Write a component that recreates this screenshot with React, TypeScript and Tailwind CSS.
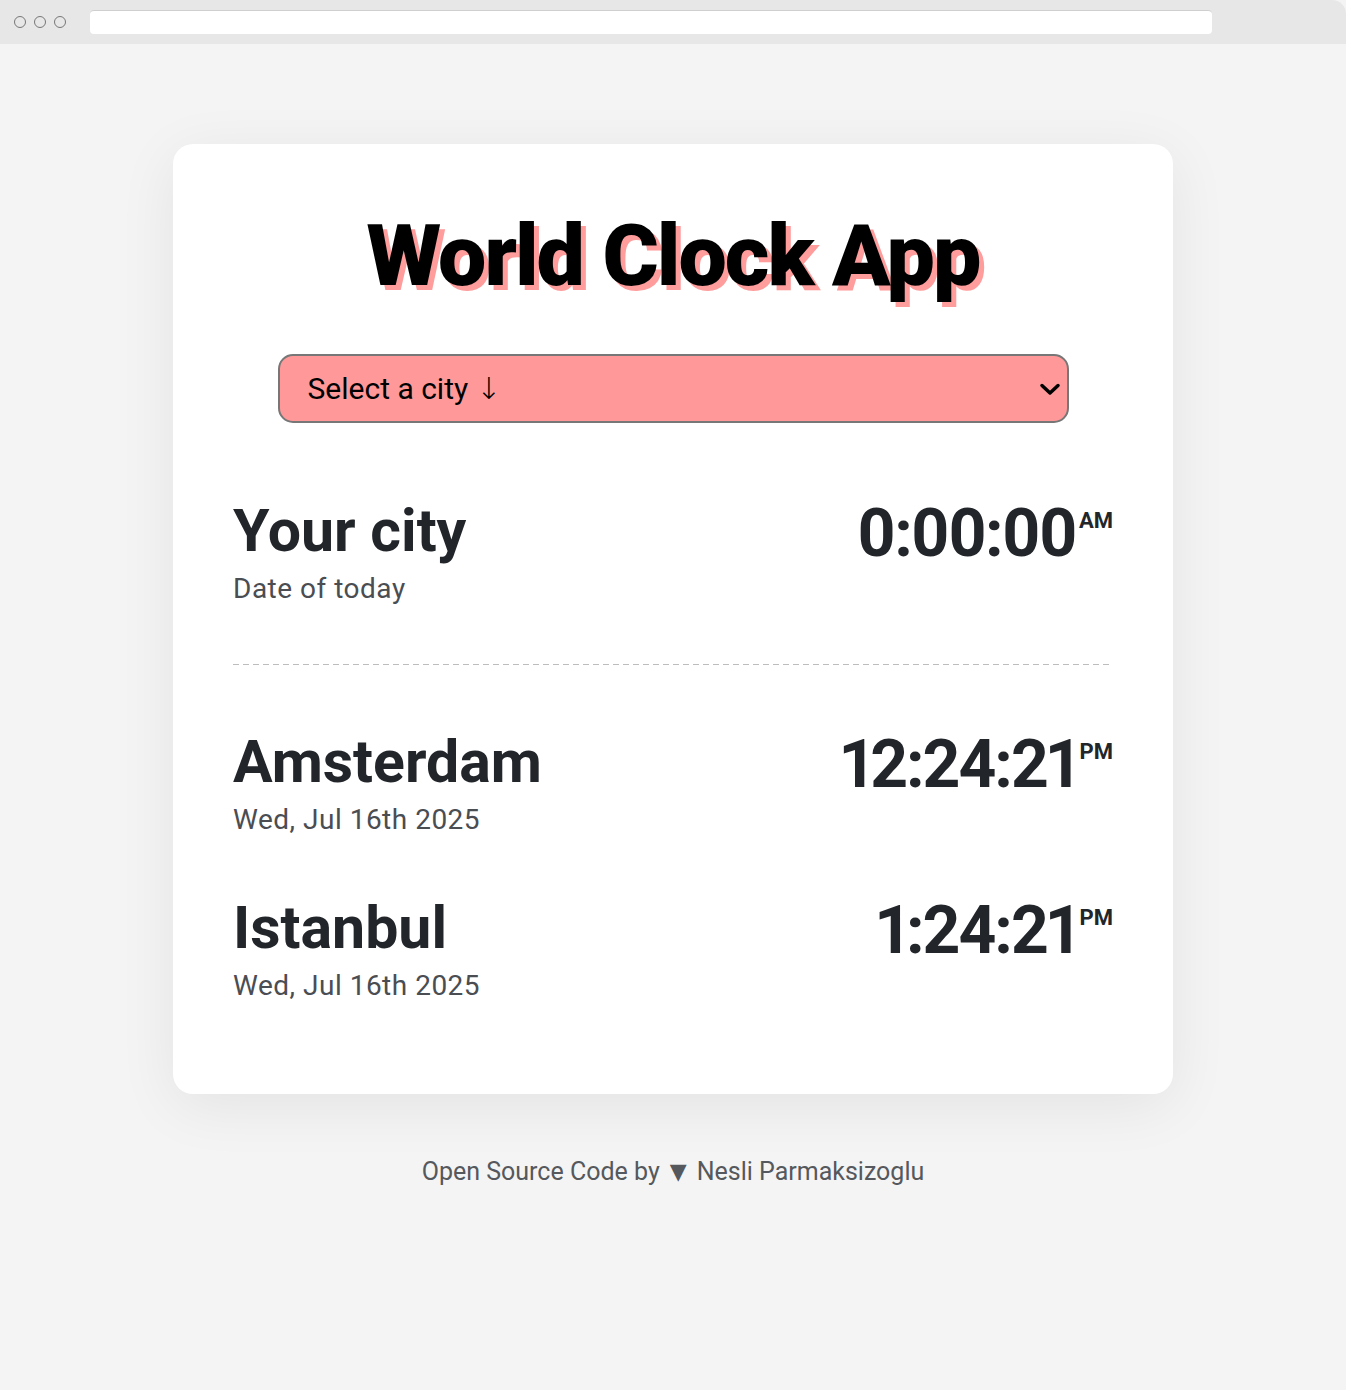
import React from "react";

const font = { fontFamily: "Roboto, 'Liberation Sans', sans-serif" };
const symbolFont = { fontFamily: "'DejaVu Sans', sans-serif" };

function Row({ name, date, time, ampm }: { name: string; date: string; time: string; ampm: string }) {
  return (
    <div className="flex items-start justify-between">
      <div className="flex flex-col">
        <div className="text-[59px] font-bold leading-[64px] text-[#22262b]">{name}</div>
        <div className="mt-[10px] text-[28px] leading-[32px] text-[#4a4d52] tracking-[0.5px]">{date}</div>
      </div>
      <div className="flex items-start text-[#22262b]">
        <span className="text-[66px] font-bold leading-[70px] tracking-[-2px] proportional-nums">{time}</span>
        <span className="ml-[3px] mt-[10px] text-[22px] font-bold leading-[24px]">{ampm}</span>
      </div>
    </div>
  );
}

export default function App() {
  return (
    <div className="min-h-[1390px] w-full bg-[#f4f4f4]" style={font}>
      <div className="flex h-[44px] items-center bg-[#e7e7e7] rounded-tr-[14px]">
        <div className="ml-[14px] flex gap-[8px]">
          <span className="h-[12px] w-[12px] rounded-full border border-[#777]" />
          <span className="h-[12px] w-[12px] rounded-full border border-[#777]" />
          <span className="h-[12px] w-[12px] rounded-full border border-[#777]" />
        </div>
        <div className="ml-[24px] h-[24px] w-[1122px] rounded-[4px] border-t border-[#cfcfcf] bg-white" />
      </div>
      <div className="flex flex-col items-center pt-[100px]">
        <div className="flex h-[950px] w-[1000px] flex-col rounded-[20px] bg-white px-[60px] shadow-[0_12px_60px_rgba(0,0,0,0.07)]">
          <h1 className="mt-[62px] text-center text-[86px] font-black leading-[100px] tracking-[-2px] text-black [text-shadow:5px_5px_0_#ff9c9c]">
            World Clock App
          </h1>
          <div className="mx-auto mt-[48px] flex h-[69px] w-[791px] items-center justify-between rounded-[15px] border-2 border-[#777] bg-[#ff9999] pl-[28px] pr-[6px]">
            <span className="flex items-center text-[30px] leading-[34px] text-black">
              Select a city
              <span className="ml-[8px] text-[30px] font-light leading-[34px] text-black" style={symbolFont}>↓</span>
            </span>
            <svg width="22" height="14" viewBox="0 0 22 14" fill="none">
              <path d="M3 3.5l8 7.5 8-7.5" stroke="#000" strokeWidth="3.5" strokeLinecap="round" strokeLinejoin="round" />
            </svg>
          </div>
          <div className="mt-[76px]">
            <Row name="Your city" date="Date of today" time="0:00:00" ampm="AM" />
          </div>
          <div className="mt-[59px] h-[1px] bg-[linear-gradient(to_right,#bdbdbd_6px,transparent_6px)] bg-[length:10px_1px]" />
          <div className="mt-[65px]">
            <Row name="Amsterdam" date="Wed, Jul 16th 2025" time="12:24:21" ampm="PM" />
          </div>
          <div className="mt-[60px]">
            <Row name="Istanbul" date="Wed, Jul 16th 2025" time="1:24:21" ampm="PM" />
          </div>
        </div>
        <div className="mt-[62px] flex items-center text-[25px] leading-[32px] text-[#55585c]">
          Open Source Code by
          <span className="mx-[10px] text-[22px] leading-[32px] text-[#55585c]" style={symbolFont}>▼</span>
          Nesli Parmaksizoglu
        </div>
      </div>
    </div>
  );
}
